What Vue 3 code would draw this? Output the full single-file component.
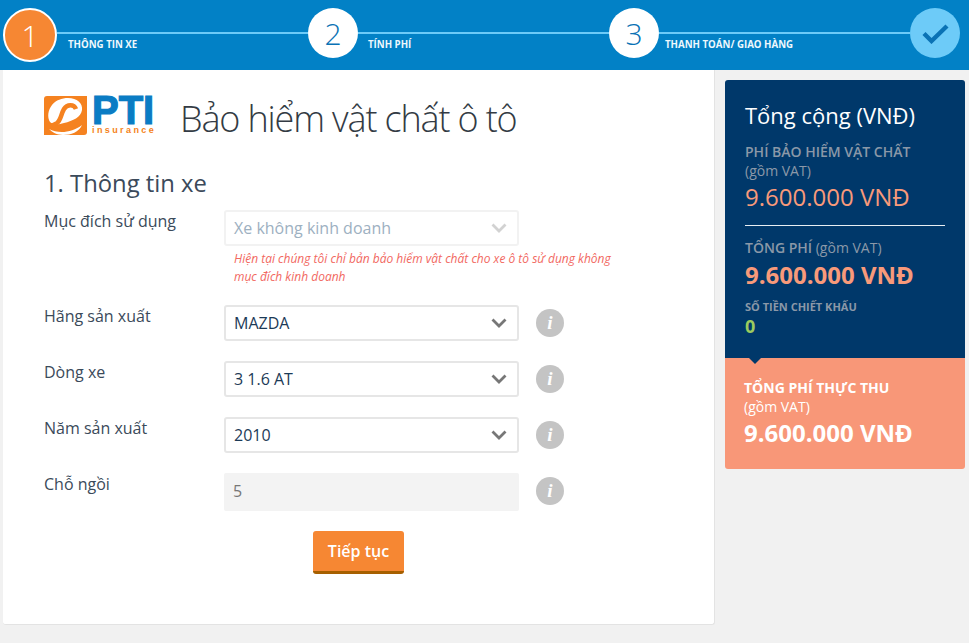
<script setup>
const steps = [
  { n: '1', label: 'THÔNG TIN XE', active: true },
  { n: '2', label: 'TÍNH PHÍ' },
  { n: '3', label: 'THANH TOÁN/ GIAO HÀNG' }
]
const rows = [
  { label: 'Hãng sản xuất', value: 'MAZDA' },
  { label: 'Dòng xe', value: '3 1.6 AT' },
  { label: 'Năm sản xuất', value: '2010' }
]
</script>

<template>
  <div class="page">
    <header class="stepper">
      <div v-for="s in steps" :key="s.n" class="step" :class="{ active: s.active }">
        <div class="circle">{{ s.n }}</div>
        <div class="step-body">
          <div class="line"></div>
          <div class="step-label">{{ s.label }}</div>
        </div>
      </div>
      <div class="circle done">
        <svg width="27" height="21" viewBox="0 0 27 21"><path d="M2 10.500 L9.500 18 L25 3" fill="none" stroke="#0a72b5" stroke-width="4.400"/></svg>
      </div>
    </header>

    <div class="content">
      <main class="card">
        <div class="brand">
          <div class="logo">
            <svg class="logo-mark" width="43" height="39" viewBox="0 0 43 39">
              <path d="M3 0H43V36Q43 39 40 39H0V3Q0 0 3 0Z" fill="#f58220"/>
              <path d="M24 2C33 2 39 7 38 14C37 21 29 25 20 27C14 29 9 29 6 26C3 21 4 14 8 9C12 4 18 2 24 2Z" fill="#fff"/>
              <path d="M32 13C30 8 23 8 20 13C17 18 17 24 13 27C10 29 7 30 3 31" fill="none" stroke="#f58220" stroke-width="4.500"/>
              <path d="M5 33C14 38 28 37 38 29C35 36 27 39 19 39C13 39 8 36 5 33Z" fill="#fff"/>
            </svg>
            <div class="logo-text">
              <div class="pti">PTI</div>
              <div class="ins">insurance</div>
            </div>
          </div>
          <h1 class="title">Bảo hiểm vật chất ô tô</h1>
        </div>

        <h2 class="section">1. Thông tin xe</h2>

        <div class="row first">
          <label class="lbl">Mục đích sử dụng</label>
          <div class="field">
            <div class="select disabled">
              <span>Xe không kinh doanh</span>
              <svg class="chev" width="16" height="10" viewBox="0 0 16 10"><path d="M1.5 1.5 L8 8 L14.500 1.500" fill="none" stroke="#d2d2d2" stroke-width="2.800"/></svg>
            </div>
            <p class="warn">Hiện tại chúng tôi chỉ bản bảo hiểm vật chất cho xe ô tô sử dụng không mục đích kinh doanh</p>
          </div>
        </div>

        <div v-for="r in rows" :key="r.label" class="row">
          <label class="lbl">{{ r.label }}</label>
          <div class="select">
            <span>{{ r.value }}</span>
            <svg class="chev" width="16" height="10" viewBox="0 0 16 10"><path d="M1.5 1.5 L8 8 L14.500 1.500" fill="none" stroke="#777" stroke-width="2.800"/></svg>
          </div>
          <div class="info">i</div>
        </div>

        <div class="row seats">
          <label class="lbl">Chỗ ngồi</label>
          <div class="readonly">5</div>
          <div class="info">i</div>
        </div>

        <div class="actions"><button class="btn">Tiếp tục</button></div>
      </main>

      <aside class="summary">
        <div class="navy">
          <h3 class="sum-title">Tổng cộng (VNĐ)</h3>
          <div class="cap">PHÍ BẢO HIỂM VẬT CHẤT</div>
          <div class="vat">(gồm VAT)</div>
          <div class="amount light">9.600.000 VNĐ</div>
          <hr class="rule" />
          <div class="cap inline">TỔNG PHÍ <span class="vat">(gồm VAT)</span></div>
          <div class="amount bold">9.600.000 VNĐ</div>
          <div class="cap small">SỐ TIỀN CHIẾT KHẤU</div>
          <div class="zero">0</div>
        </div>
        <div class="salmon">
          <div class="sal-cap">TỔNG PHÍ THỰC THU</div>
          <div class="sal-vat">(gồm VAT)</div>
          <div class="sal-amount">9.600.000 VNĐ</div>
        </div>
      </aside>
    </div>
  </div>
</template>

<style>
html, body { margin: 0; background: #f1f1f1; }
</style>

<style scoped>
.page {
  width: 969px;
  height: 643px;
  overflow: hidden;
  background: #f1f1f1;
  font-family: "Open Sans", "Noto Sans", sans-serif;
  color: #3b4a5a;
}
.stepper {
  height: 70px;
  box-sizing: border-box;
  background: #0281c6;
  display: flex;
  align-items: flex-start;
  padding: 8px 9px 0 3px;
}
.step { flex: 1 1 0; display: flex; min-width: 0; }
.step.active { flex: 0 0 305px; }
.circle {
  flex: none;
  width: 50px;
  height: 50px;
  border-radius: 50%;
  background: #fff;
  color: #0a72b5;
  font-size: 30px;
  font-weight: 300;
  display: flex;
  align-items: center;
  justify-content: center;
}
.active .circle {
  width: 54px;
  height: 54px;
  box-sizing: border-box;
  border: 2px solid #fff;
  background: #f68733;
  color: #fff;
}
.circle.done { background: #6dcbf8; }
.step-body { flex: 1; padding-top: 24px; }
.line { height: 2px; background: #6dcbf8; }
.step-label {
  margin: 4px 0 0 10px;
  font-size: 9.700px;
  line-height: 14px;
  font-weight: 700;
  color: #eef8fd;
  white-space: nowrap;
}
.active .step-label { margin-left: 11px; }
.step:nth-child(3) .step-label { margin-left: 6px; }

.content {
  display: flex;
  align-items: flex-start;
  padding-left: 3px;
}
.card {
  width: 712px;
  height: 555px;
  box-sizing: border-box;
  background: #fff;
  border: 1px solid #e3e3e3;
  border-top: 0;
  border-left: 0;
  border-radius: 0 0 3px 3px;
  padding: 24px 0 0 41px;
}
.brand { display: flex; align-items: flex-start; height: 50px; }
.logo { display: flex; align-items: flex-start; width: 136px; height: 39px; margin-top: 2px; flex: none; }
.logo-mark { display: block; flex: none; }
.logo-text { margin-left: 5px; width: 63px; }
.pti {
  font-family: "Liberation Sans", sans-serif;
  font-weight: 700;
  font-size: 40px;
  line-height: 29px;
  height: 29px;
  color: #0a7cc4;
  -webkit-text-stroke: 1.200px #0a7cc4;
}
.ins {
  margin-top: 1px;
  font-family: "Liberation Sans", sans-serif;
  font-size: 9px;
  line-height: 9px;
  font-weight: 700;
  letter-spacing: 2.400px;
  color: #f58220;
  white-space: nowrap;
}
.title {
  margin: 0;
  font-size: 36px;
  line-height: 50px;
  font-weight: 300;
  letter-spacing: -1.150px;
  color: #333b44;
  white-space: nowrap;
}
.section {
  margin: 24px 0 0;
  font-size: 23.800px;
  line-height: 31px;
  font-weight: 400;
  color: #3b4a5a;
}
.row {
  display: flex;
  align-items: flex-start;
  margin-top: 18px;
  height: 38px;
}
.row.first { height: auto; margin-top: 11px; margin-bottom: 19px; }
.lbl {
  flex: none;
  width: 180px;
  font-size: 16px;
  line-height: 22px;
  color: #3b4a5a;
}
.row.first + .row { margin-top: 0; }
.field { width: 295px; }
.select {
  box-sizing: border-box;
  width: 295px;
  height: 36px;
  flex: none;
  background: #fff;
  border: 2px solid #e6e6e6;
  border-radius: 3px;
  display: flex;
  align-items: center;
  justify-content: space-between;
  padding: 0 10px 0 8px;
  font-size: 16px;
  color: #1c3a57;
}
.select.disabled { border-color: #f2f2f2; color: #9db0c1; }
.chev { display: block; }
.warn {
  margin: 4px 0 0 10px;
  width: 385px;
  font-size: 12px;
  line-height: 18px;
  font-style: italic;
  color: #f2685f;
}
.info {
  flex: none;
  width: 28px;
  height: 28px;
  margin: 4px 0 0 17px;
  border-radius: 50%;
  background: #c4c4c4;
  color: #fff;
  font: italic 700 19px/28px "Liberation Serif", serif;
  text-align: center;
}
.readonly {
  box-sizing: border-box;
  flex: none;
  width: 295px;
  height: 38px;
  background: #f3f3f3;
  border-radius: 2px;
  padding-left: 9px;
  font-size: 16px;
  line-height: 36px;
  color: #777;
}
.actions { width: 295px; margin: 20px 0 0 180px; padding-left: 89px; box-sizing: border-box; }
.btn {
  display: block;
  box-sizing: border-box;
  width: 91px;
  height: 43px;
  border: 0;
  border-bottom: 3px solid #a65f00;
  border-radius: 3px;
  background: #f68733;
  color: #fff;
  font-family: inherit;
  font-size: 16px;
  font-weight: 600;
  padding: 0;
}

.summary {
  width: 240px;
  margin: 10px 0 0 10px;
  border-radius: 3px;
  overflow: hidden;
}
.navy {
  height: 278px;
  box-sizing: border-box;
  background: #00386a;
  padding: 19px 20px 0;
  position: relative;
  color: #fff;
}
.navy::after {
  content: "";
  position: absolute;
  left: 23px;
  bottom: -6px;
  border: 7px solid transparent;
  border-top-color: #00386a;
  border-bottom: 0;
  z-index: 1;
}
.sum-title { margin: 0; font-size: 22px; line-height: 32px; font-weight: 400; }
.cap { margin-top: 11px; font-size: 14px; line-height: 19px; font-weight: 600; color: #8b98a8; white-space: nowrap; }
.vat { font-size: 14px; line-height: 19px; font-weight: 400; color: #8b98a8; }
.amount { font-size: 24px; line-height: 33px; color: #f89a7a; white-space: nowrap; }
.amount.light { margin-top: 0; font-weight: 400; }
.amount.bold { font-weight: 700; margin-top: 1px; }
.rule { margin: 12px 0 0; border: 0; height: 1px; background: #e8eef3; }
.cap.inline { margin-top: 12px; }
.cap.small { margin-top: 7px; font-size: 11px; line-height: 17px; font-weight: 700; }
.zero { font-size: 18px; line-height: 22px; font-weight: 700; color: #9ccb5f; }
.salmon {
  height: 111px;
  box-sizing: border-box;
  background: #f89778;
  padding: 20px 19px 0;
  color: #fff;
}
.sal-cap { font-size: 14px; line-height: 19px; font-weight: 700; white-space: nowrap; }
.sal-vat { font-size: 14px; line-height: 19px; }
.sal-amount { font-size: 24px; line-height: 33px; font-weight: 700; white-space: nowrap; }
</style>
